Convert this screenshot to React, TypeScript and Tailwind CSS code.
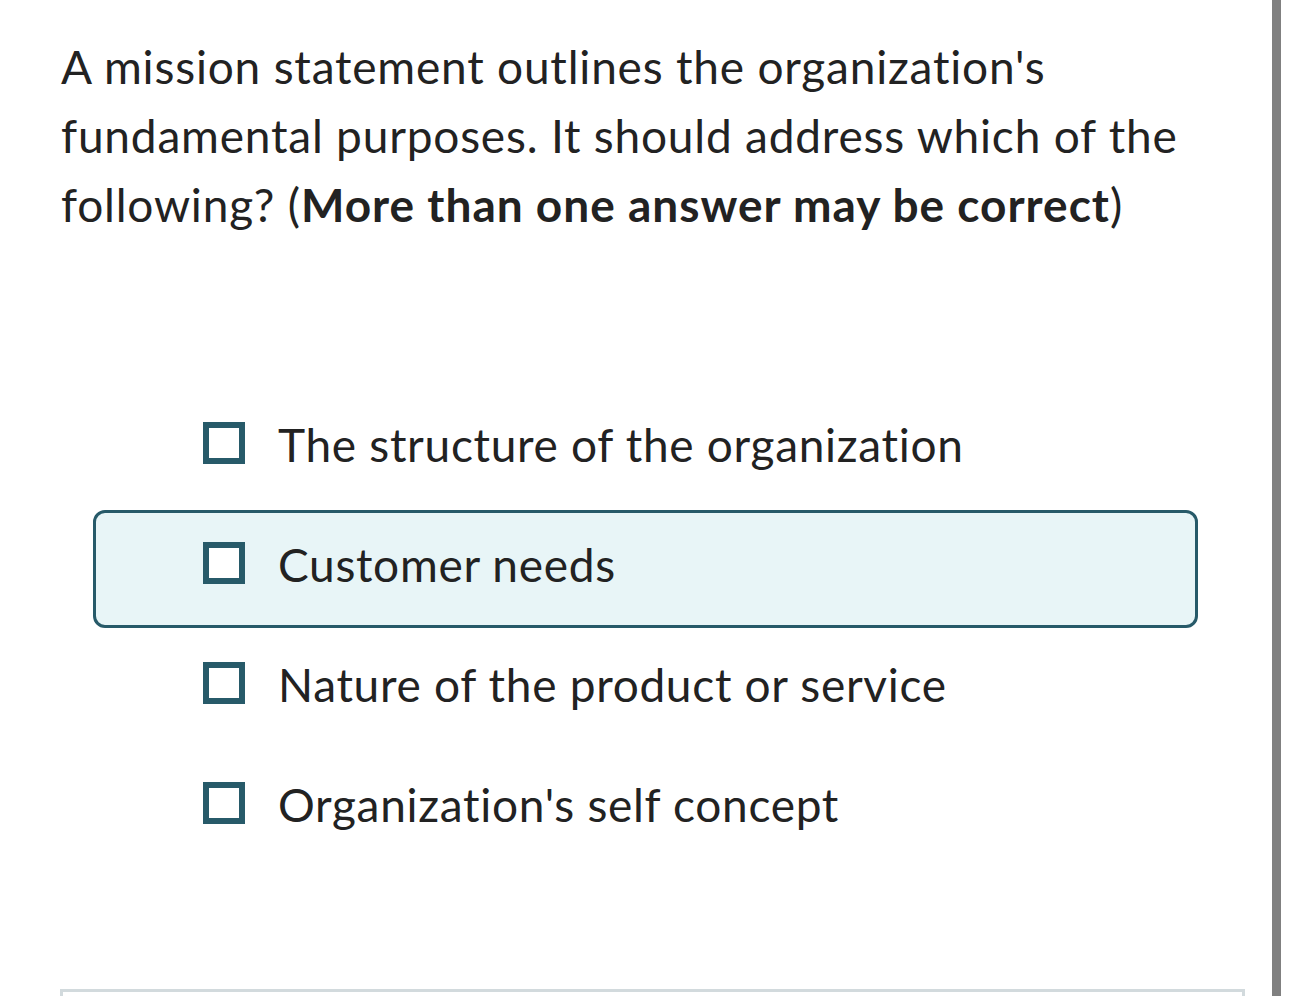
const options = [
  "The structure of the organization",
  "Customer needs",
  "Nature of the product or service",
  "Organization's self concept",
];

function Checkbox() {
  return <span className="block h-[42px] w-[42px] shrink-0 border-[6px] border-[#275a69] bg-white" />;
}

export default function App() {
  const active = 1;
  return (
    <div
      className="flex h-[996px] w-[1290px] overflow-hidden bg-white text-[#222222]"
      style={{ fontFamily: "Lato, 'Open Sans', sans-serif" }}
    >
      <main className="flex w-[1272px] flex-col">
        <p className="ml-[61px] mt-[32px] text-[46px] leading-[69px] tracking-[0.8px]">
          A mission statement outlines the organization's
          <br />
          fundamental purposes. It should address which of the
          <br />
          following? (<span className="font-bold tracking-[1px]">More than one answer may be correct</span>)
        </p>

        <div className="ml-[93px] mt-[151px] flex w-[1105px] flex-col gap-[2px]">
          {options.map((label, i) => (
            <label
              key={label}
              className={
                i === active
                  ? "flex h-[118px] items-start gap-[33px] rounded-[12px] border-[3px] border-[#275a69] bg-[#e8f5f7] pl-[107px] pt-[29px]"
                  : "flex h-[118px] items-start gap-[33px] rounded-[12px] border-[3px] border-transparent pl-[107px] pt-[29px]"
              }
            >
              <Checkbox />
              <span className="mt-[1px] text-[46px] leading-[44px] tracking-[0.7px]">{label}</span>
            </label>
          ))}
        </div>

        <div className="ml-[60px] mt-[121px] h-[40px] w-[1185px] shrink-0 border-[3px] border-b-0 border-[#d2dadd]" />
      </main>
      <div className="h-full w-[9px] bg-[#808080]" />
    </div>
  );
}
